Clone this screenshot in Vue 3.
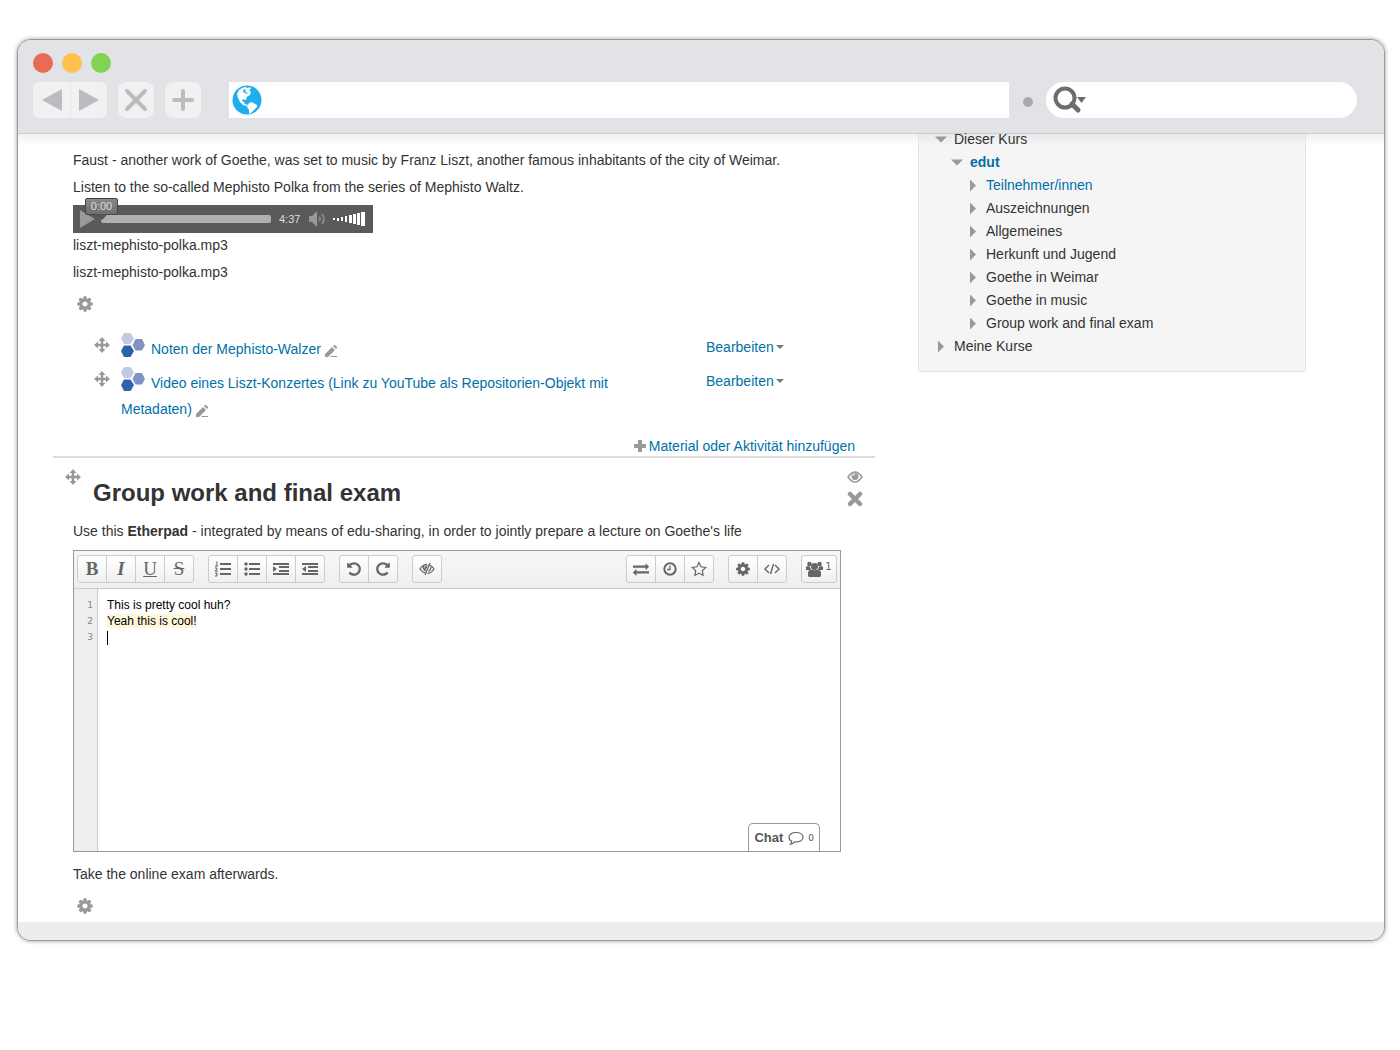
<script setup>
import { ref } from 'vue'

const paths = {
  cog: 'M1152 896q0-106-75-181t-181-75-181 75-75 181 75 181 181 75 181-75 75-181zm512-109v222q0 12-8 23t-20 13l-185 28q-19 54-39 91 35 50 107 138 10 12 10 25t-9 23q-27 37-99 108t-94 71q-12 0-26-9l-138-108q-44 23-91 38-16 136-29 186-7 28-36 28h-222q-14 0-24.500-8.500t-11.500-21.500l-28-184q-49-16-90-37l-141 107q-10 9-25 9-14 0-25-11-126-114-165-168-7-10-7-23 0-12 8-23 15-21 51-66.500t54-70.500q-27-50-41-99l-183-27q-13-2-21-12.500t-8-23.500v-222q0-12 8-23t19-13l186-28q14-46 39-92-40-57-107-138-10-12-10-24 0-10 9-23 26-36 98.500-107.500t94.500-71.500q13 0 26 10l138 107q44-23 91-38 16-136 29-186 7-28 36-28h222q14 0 24.500 8.500t11.500 21.500l28 184q49 16 90 37l142-107q9-9 24-9 13 0 25 10 129 119 165 170 7 8 7 22 0 12-8 23-15 21-51 66.500t-54 70.500q26 50 41 98l183 28q13 2 21 12.500t8 23.500z',
  exchange: 'M1792 1184v192q0 13-9.500 22.500t-22.500 9.500h-1376v192q0 13-9.500 22.500t-22.500 9.500q-12 0-24-10l-319-320q-9-9-9-22 0-14 9-23l320-320q9-9 23-9 13 0 22.500 9.500t9.500 22.500v192h1376q13 0 22.500 9.500t9.500 22.500zm0-544q0 14-9 23l-320 320q-9 9-23 9-13 0-22.500-9.500t-9.500-22.500v-192h-1376q-13 0-22.500-9.500t-9.500-22.500v-192q0-13 9.500-22.500t22.500-9.500h1376v-192q0-14 9-23t23-9q12 0 24 10l319 319q9 9 9 23z',
  undo: 'M1664 896q0 156-61 298t-164 245-245 164-298 61q-172 0-327-72.500t-264-204.500q-7-10-6.500-22.500t8.500-20.500l137-138q10-9 25-9 16 2 23 12 73 95 179 147t225 52q104 0 198.500-40.500t163.500-109.500 109.500-163.500 40.500-198.500-40.500-198.500-109.500-163.500-163.500-109.500-198.500-40.500q-98 0-188 35.500t-160 101.500l137 138q31 30 14 69-17 40-59 40h-448q-26 0-45-19t-19-45v-448q0-42 40-59 39-17 69 14l130 129q107-101 244.500-156.500t284.500-55.500q156 0 298 61t245 164 164 245 61 298z'
}

const movePath = 'M8 0l3.500 4H9.250v2.750H12V4.500L16 8l-4 3.500V9.250H9.250V12h2.250L8 16l-3.500-4h2.250V9.250H4v2.250L0 8l4-3.500v2.250h2.750V4H4.500z'

const activities = [
  'Noten der Mephisto-Walzer',
  'Video eines Liszt-Konzertes (Link zu YouTube als Repositorien-Objekt mit Metadaten)'
]

const tree = [
  { label: 'Dieser Kurs', level: 0, open: true },
  { label: 'edut', level: 1, open: true, link: true, bold: true },
  { label: 'Teilnehmer/innen', level: 2, link: true },
  { label: 'Auszeichnungen', level: 2 },
  { label: 'Allgemeines', level: 2 },
  { label: 'Herkunft und Jugend', level: 2 },
  { label: 'Goethe in Weimar', level: 2 },
  { label: 'Goethe in music', level: 2 },
  { label: 'Group work and final exam', level: 2 },
  { label: 'Meine Kurse', level: 0 }
]

const position = ref(0)
</script>

<template>
  <div class="window">
    <header class="chrome">
      <div class="lights">
        <button class="light red" aria-label="Close window"></button>
        <button class="light yellow" aria-label="Minimize window"></button>
        <button class="light green" aria-label="Maximize window"></button>
      </div>
      <div class="bar">
        <div class="history">
          <button class="nav" aria-label="Back"><svg width="20" height="22"><path d="M0 11L20 0v22z" /></svg></button>
          <button class="nav" aria-label="Forward"><svg width="20" height="22"><path d="M20 11L0 0v22z" /></svg></button>
        </div>
        <button class="nav single" aria-label="Stop"><svg width="24" height="24"><path class="thick" d="M3 3l18 18M21 3L3 21" /></svg></button>
        <button class="nav single" aria-label="New tab"><svg width="24" height="24"><path class="thick" d="M12 3v18M3 12h18" /></svg></button>
        <div class="url">
          <svg width="30" height="30" viewBox="0 0 30 30">
            <circle cx="15" cy="15" r="14.500" fill="#1eaeeb" />
            <path fill="#fff" d="M7 5l3-2 3-1 3 1 2-1 1 2-2 1 2 2-1 3-2 1-2 2 1 1-2 1-2-1-1 2 2 1 1 2 3 1-1 1-4-1-3-3-2-4-1-4zM17 18l3-1 5 3 0 2-3 3-3 3-2 1 0-4-2-3z" />
            <path fill="#1eaeeb" d="M12 4l2 1-1 2 3 1-1 1-4-2z" />
          </svg>
          <input type="text" aria-label="Address" />
        </div>
        <span class="dot"></span>
        <div class="search">
          <svg width="34" height="28" viewBox="0 0 34 28">
            <circle cx="12" cy="12" r="9.500" fill="none" stroke="#6b6d70" stroke-width="4" />
            <path d="M19 18l6 6" stroke="#6b6d70" stroke-width="5" stroke-linecap="round" />
            <path d="M24 11h9l-4.500 6z" fill="#6b6d70" />
          </svg>
          <input type="search" aria-label="Search" />
        </div>
      </div>
    </header>

    <div class="page">
      <main>
        <section class="topic first">
          <p>Faust - another work of Goethe, was set to music by Franz Liszt, another famous inhabitants of the city of Weimar.</p>
          <p>Listen to the so-called Mephisto Polka from the series of Mephisto Waltz.</p>
          <div class="player">
            <button aria-label="Play"><svg width="15" height="18"><path d="M0 0l15 9-15 9z" fill="#999" /></svg></button>
            <div class="track">
              <input v-model="position" type="range" min="0" max="277" aria-label="Position" />
              <span class="bubble">0:00</span>
            </div>
            <span class="time">4:37</span>
            <button aria-label="Mute">
              <svg width="17" height="16" viewBox="0 0 17 16">
                <path d="M0 5h3l5-5v16l-5-5H0z" fill="#999" />
                <path d="M10 6q2 2 0 4M13 3q4 5 0 10" fill="none" stroke="#888" stroke-width="2" />
              </svg>
            </button>
            <svg class="volume" width="33" height="14">
              <path fill="#fff" d="M1 6h2v2H1zM5 6h2v3H5zM9 5h2v4H9zM13 4h2v6h-2zM17 3h3v8h-3zM21 2h3v10h-3zM25 1h3v12h-3zM29 0h4v14h-4z" />
            </svg>
          </div>
          <p>liszt-mephisto-polka.mp3</p>
          <p>liszt-mephisto-polka.mp3</p>
          <a href="#" class="settings" aria-label="Settings"><svg width="18" height="18" viewBox="0 0 1792 1792"><path :d="paths.cog" /></svg></a>
          <ul class="activities">
            <li v-for="name in activities" :key="name">
              <a href="#" class="move" aria-label="Move"><svg width="16" height="16"><path :d="movePath" /></svg></a>
              <div class="name">
                <svg class="hex" width="24" height="24">
                  <path fill="#c3c8e4" d="M3 0h6.500L13 5.500 9.500 11H3L0 5.500z" />
                  <path fill="#2f62ab" d="M3 12.500h6.500L13 18l-3.500 6H3l-3-6z" />
                  <path fill="#8292c5" d="M14.500 6H21l3 6-3 5.500h-6.500L11.500 12z" />
                </svg><a href="#">{{ name }}</a><a href="#" class="rename" aria-label="Rename"><svg width="12" height="12"><path d="M0 12V9l7-7 3 3-7 7zM8 1l1-1h1l2 2v1l-1 1zM6 11h6v1H5z" /></svg></a>
              </div>
              <a href="#" class="edit">Bearbeiten<i></i></a>
            </li>
          </ul>
          <div class="add"><a href="#"><svg width="12" height="12"><path d="M4 0h4v4h4v4H8v4H4V8H0V4h4z" /></svg>Material oder Aktivität hinzufügen</a></div>
        </section>

        <section class="topic second">
          <div class="head">
            <a href="#" class="move" aria-label="Move section"><svg width="16" height="16"><path :d="movePath" /></svg></a>
            <h2>Group work and final exam</h2>
            <div class="tools">
              <a href="#" aria-label="Hide"><svg width="16" height="12" viewBox="0 0 16 12"><path d="M1 6q7-10 14 0-7 10-14 0z" fill="none" stroke="#999" stroke-width="1.500" /><circle cx="8" cy="5.500" r="3.500" /><path d="M6 5q0-2 2-2" fill="none" stroke="#fff" /></svg></a>
              <a href="#" aria-label="Delete"><svg width="16" height="16"><path d="M3 3l10 10M13 3L3 13" stroke="#999" stroke-width="4.500" stroke-linecap="round" /></svg></a>
            </div>
          </div>
          <p>Use this <b>Etherpad</b> - integrated by means of edu-sharing, in order to jointly prepare a lecture on Goethe's life</p>

          <div class="pad">
            <div class="toolbar">
              <div class="group letters">
                <button aria-label="Bold">B</button>
                <button aria-label="Italic" class="it">I</button>
                <button aria-label="Underline" class="un">U</button>
                <button aria-label="Strikethrough" class="st">S</button>
              </div>
              <div class="group">
                <button aria-label="Ordered list"><svg width="16" height="16"><path d="M5 2h11v2H5zM5 7h11v2H5zM5 12h11v2H5z" /><path d="M1 1h1v4M0 5h3M0 7h2v1L0 10h3M0 12h2v3H0M1 13h1" fill="none" stroke="#666" /></svg></button>
                <button aria-label="Unordered list"><svg width="16" height="16"><path d="M5 2h11v2H5zM5 7h11v2H5zM5 12h11v2H5z" /><circle cx="2" cy="3" r="1.700" /><circle cx="2" cy="8" r="1.700" /><circle cx="2" cy="13" r="1.700" /></svg></button>
                <button aria-label="Indent"><svg width="16" height="16"><path d="M0 2h16v2H0zM6 5h10v2H6zM6 9h10v2H6zM0 12h16v2H0zM0 5l4 3-4 3z" /></svg></button>
                <button aria-label="Outdent"><svg width="16" height="16"><path d="M0 2h16v2H0zM6 5h10v2H6zM6 9h10v2H6zM0 12h16v2H0zM4 5L0 8l4 3z" /></svg></button>
              </div>
              <div class="group">
                <button aria-label="Undo"><svg width="16" height="16" viewBox="0 0 1792 1792"><path :d="paths.undo" /></svg></button>
                <button aria-label="Redo"><svg width="16" height="16" viewBox="0 0 1792 1792"><path transform="translate(1792 0) scale(-1 1)" :d="paths.undo" /></svg></button>
              </div>
              <div class="group">
                <button aria-label="Clear authorship colors"><svg width="16" height="14" viewBox="0 0 16 14"><path d="M8 2.500Q4 2.500 1 7q2 3 5 4M10.500 3Q13 4 15 7q-2.500 4-6.500 4.500M5 4q-1.500 3 1.500 5M11 1L6 13M12 5q0 3-2.500 4.500" fill="none" stroke="#666" stroke-width="1.300" /><path d="M7 4l2-1-3 6Q4 6 7 4z" /></svg></button>
              </div>
              <span class="spacer"></span>
              <div class="group">
                <button aria-label="Import/Export"><svg width="16" height="16" viewBox="0 0 1792 1792"><path :d="paths.exchange" /></svg></button>
                <button aria-label="Timeslider"><svg width="16" height="16"><circle cx="8" cy="8" r="5.700" fill="none" stroke="#666" stroke-width="2" /><path d="M8 4.500v4H5" fill="none" stroke="#666" stroke-width="1.300" /></svg></button>
                <button aria-label="Saved revision"><svg width="16" height="16"><path d="M8 1.500l2 4.300 4.700.6-3.400 3.300.8 4.700L8 12.100l-4.100 2.300.8-4.700L1.300 6.400 6 5.800z" fill="none" stroke="#666" stroke-width="1.200" /></svg></button>
              </div>
              <div class="group">
                <button aria-label="Settings"><svg width="16" height="16" viewBox="0 0 1792 1792"><path :d="paths.cog" /></svg></button>
                <button aria-label="Embed"><svg width="16" height="12"><path d="M5 2L1 6l4 4M11 2l4 4-4 4M9.500 1l-3 10" fill="none" stroke="#666" stroke-width="1.400" /></svg></button>
              </div>
              <div class="group">
                <button class="users" aria-label="Users"><svg width="17" height="16"><circle cx="3.500" cy="3" r="2.300" /><circle cx="13.500" cy="3" r="2.300" /><path d="M0 9V6q1-1.500 4-.5L5 9zM17 9V6q-1-1.500-4-.5L12 9zM2 15v-3q0-3 3-3.500 3.500 1.500 7 0 3 .5 3 3.500v3l-1 1H3z" /><circle cx="8.500" cy="5.500" r="3.500" /></svg><span>1</span></button>
              </div>
            </div>
            <div class="sheet">
              <ol class="gutter"><li>1</li><li>2</li><li>3</li></ol>
              <div class="text" contenteditable="true" role="textbox" aria-multiline="true" aria-label="Pad text"><div>This is pretty cool huh?</div><div><mark>Yeah this is cool!</mark></div><div><span class="caret"></span></div></div>
              <button class="chat"><b>Chat</b><svg width="16" height="14"><path d="M8 1.500c4 0 7 2 7 4.800s-3 4.700-7 4.700l-1.500-.1Q5 13 2.500 13.200 3.800 12 3.700 10.200 1 9 1 6.300c0-2.800 3-4.800 7-4.800z" fill="none" stroke="#666" stroke-width="1.200" /></svg><small>0</small></button>
            </div>
          </div>
          <p>Take the online exam afterwards.</p>
          <a href="#" class="settings" aria-label="Settings"><svg width="18" height="18" viewBox="0 0 1792 1792"><path :d="paths.cog" /></svg></a>
        </section>
      </main>

      <aside>
        <ul class="tree">
          <li v-for="node in tree" :key="node.label" :class="['level' + node.level, { bold: node.bold }]">
            <i :class="node.open ? 'down' : 'right'"></i>
            <a v-if="node.link" href="#">{{ node.label }}</a>
            <span v-else>{{ node.label }}</span>
          </li>
        </ul>
      </aside>
    </div>
    <footer></footer>
  </div>
</template>

<style>
body {
  margin: 0;
  background: #fff;
}
</style>

<style scoped>
* {
  box-sizing: border-box;
}
.window {
  margin: 39px 15px 20px 17px;
  border: 1px solid #999;
  border-radius: 14px;
  box-shadow: 0 0 4px #999;
  overflow: hidden;
  background: #fff;
  color: #333;
  font: 14px/20px "Liberation Sans", Arial, sans-serif;
}
button {
  border: 0;
  padding: 0;
  margin: 0;
  background: none;
  display: flex;
  align-items: center;
  justify-content: center;
}
ul, ol {
  list-style: none;
  margin: 0;
  padding: 0;
}
svg {
  display: block;
  flex: none;
}
a {
  color: #0070a8;
  text-decoration: none;
}
.chrome {
  background: #e2e3e7;
  border-bottom: 1px solid #ccc;
  padding: 13px 27px 15px 15px;
}
.lights {
  display: flex;
  gap: 9px;
}
.light {
  width: 20px;
  height: 20px;
  border-radius: 50%;
}
.red { background: #e96b56; }
.yellow { background: #fdc04f; }
.green { background: #82d354; }
.bar {
  display: flex;
  align-items: center;
  margin-top: 9px;
}
.history {
  display: flex;
  border-radius: 6px;
  overflow: hidden;
}
.nav {
  width: 37px;
  height: 36px;
  background: #f0f1f1;
  fill: #bbbcc0;
}
.nav + .nav {
  border-left: 1px solid #e5e6e8;
}
.nav.single {
  width: 36px;
  margin-left: 11px;
  border: 0;
  border-radius: 8px;
}
.thick {
  stroke: #bbbcc0;
  stroke-width: 4;
  stroke-linecap: round;
}
.url {
  display: flex;
  align-items: center;
  flex: 777 1 0;
  height: 36px;
  margin-left: 28px;
  padding-left: 3px;
  background: #fff;
}
input {
  flex: 1;
  min-width: 0;
  border: 0;
  margin: 0;
  background: none;
  outline: 0;
}
.dot {
  width: 10px;
  height: 10px;
  margin: 4px 13px 0 14px;
  border-radius: 50%;
  background: #a7a9ac;
}
.search {
  display: flex;
  align-items: center;
  flex: 286 1 0;
  height: 36px;
  padding: 0 18px 0 7px;
  border-radius: 18px;
  background: #fff;
}
.page {
  display: grid;
  grid-template-columns: 822fr 388fr;
  gap: 43px;
  align-items: start;
  padding: 0 78px 0 35px;
  background: linear-gradient(#f1f1f1, #fff 12px);
}
p {
  margin: 0 0 7px;
}
.topic {
  padding: 0 20px;
}
.first {
  padding-top: 16px;
  border-bottom: 2px solid #ddd;
}
.player {
  display: flex;
  align-items: center;
  width: 300px;
  height: 28px;
  margin: 8px 0 2px;
  padding: 0 8px 0 7px;
  background: #5b595a;
}
.track {
  position: relative;
  width: 170px;
  height: 8px;
  margin: 0 8px 0 6px;
}
.track input {
  appearance: none;
  display: block;
  width: 100%;
  height: 8px;
  border-radius: 2px;
  background: #b1afb0;
}
.track input::-webkit-slider-thumb {
  appearance: none;
  width: 0;
  height: 0;
}
.bubble {
  position: absolute;
  left: -16px;
  top: -17px;
  width: 33px;
  height: 17px;
  border: 1px solid #444;
  border-radius: 2px;
  background: linear-gradient(#888, #6e6e6e);
  color: #ddd;
  font-size: 11px;
  line-height: 15px;
  text-align: center;
}
.bubble::after {
  content: "";
  position: absolute;
  left: 10px;
  top: 15px;
  border: solid transparent;
  border-width: 6px 6px 0;
  border-top-color: #555;
}
.time {
  margin-right: 9px;
  color: #ddd;
  font-size: 11px;
}
.volume {
  margin-left: auto;
}
.settings {
  display: block;
  width: 18px;
  margin: 13px 0 0 3px;
  fill: #999;
}
.activities {
  display: flex;
  flex-direction: column;
  gap: 5px;
  margin: 20px 0 14px 21px;
}
.activities li {
  display: grid;
  grid-template-columns: 27px 1fr 149px;
}
.move {
  padding-top: 4px;
  fill: #999;
}
.name {
  padding-right: 27px;
  line-height: 26px;
}
.name svg {
  display: inline-block;
}
.hex {
  margin-right: 6px;
  vertical-align: -3px;
}
.rename {
  margin-left: 4px;
  fill: #999;
}
.rename svg {
  vertical-align: -3px;
}
.edit {
  padding-top: 4px;
}
.edit i {
  display: inline-block;
  margin-left: 2px;
  border: solid transparent;
  border-width: 4px 4px 0;
  border-top-color: #777;
  vertical-align: 3px;
}
.add {
  display: flex;
  justify-content: flex-end;
}
.add a {
  display: flex;
  align-items: center;
  gap: 3px;
  fill: #999;
}
.second {
  padding-bottom: 7px;
}
.head {
  display: flex;
  margin: 0 -8px;
  padding-top: 7px;
}
.head h2 {
  flex: 1;
  margin: 8px 0 8px 12px;
  font-size: 24px;
  line-height: 40px;
}
.head .tools {
  display: flex;
  flex-direction: column;
  gap: 8px;
  padding-top: 6px;
  fill: #999;
}
.pad {
  margin: 9px 14px 12px 0;
  border: 1px solid #999;
}
.toolbar {
  display: flex;
  gap: 14px;
  padding: 4px 3px 5px;
  border-bottom: 1px solid #ccc;
  background: linear-gradient(#f7f7f7, #eee);
}
.spacer {
  flex: 1;
}
.group {
  display: flex;
  border: 1px solid #ccc;
  border-radius: 3px;
  background: linear-gradient(#fff, #f0f0f0);
}
.group button {
  width: 28px;
  height: 26px;
  fill: #666;
  color: #666;
}
.group button + button {
  width: 29px;
  border-left: 1px solid #ccc;
}
.letters button {
  font: bold 19px/26px "Liberation Serif", serif;
}
.letters .it { font-style: italic; }
.letters .un {
  font-weight: normal;
  text-decoration: underline;
}
.letters .st {
  font-weight: normal;
  text-decoration: line-through;
}
.group .users {
  width: 34px;
  gap: 2px;
}
.users span {
  padding-bottom: 4px;
  font: 10px/12px "DejaVu Sans", sans-serif;
}
.sheet {
  position: relative;
  display: flex;
  min-height: 262px;
}
.gutter {
  width: 24px;
  padding: 8px 4px 0 0;
  border-right: 1px solid #ccc;
  background: #eee;
  color: #888;
  font: 9px/16px "DejaVu Sans", sans-serif;
  text-align: right;
}
.text {
  flex: 1;
  padding: 8px 9px;
  color: #000;
  font-size: 12px;
  line-height: 16px;
  outline: 0;
}
mark {
  background: #fff7dc;
  color: #000;
}
.caret {
  display: inline-block;
  width: 1px;
  height: 14px;
  background: #000;
  vertical-align: middle;
}
.chat {
  position: absolute;
  right: 20px;
  bottom: 0;
  height: 28px;
  padding: 0 5px;
  border: 1px solid #999;
  border-bottom: 0;
  border-radius: 5px 5px 0 0;
  background: #fff;
  color: #555;
  font: 13px/20px "Liberation Sans", Arial, sans-serif;
  gap: 5px;
}
.chat small {
  margin-left: -1px;
  font: 9px/12px "DejaVu Sans", sans-serif;
}
aside {
  border: solid #e3e3e3;
  border-width: 0 1px 1px;
  border-radius: 0 0 4px 4px;
  background: linear-gradient(#e9e9e9, #f5f5f5 12px);
  padding: 0 16px 13px;
}
.tree {
  margin-top: -6px;
}
.tree li {
  display: flex;
  align-items: center;
  line-height: 23px;
}
.tree i {
  width: 12px;
  height: 12px;
  margin-right: 7px;
  background: #999;
}
.down { clip-path: polygon(0 25%, 100% 25%, 50% 75%); }
.right { clip-path: polygon(25% 0, 75% 50%, 25% 100%); }
.level1 { padding-left: 16px; }
.level2 { padding-left: 32px; }
.bold { font-weight: bold; }
footer {
  height: 18px;
  background: #ededed;
}
</style>
